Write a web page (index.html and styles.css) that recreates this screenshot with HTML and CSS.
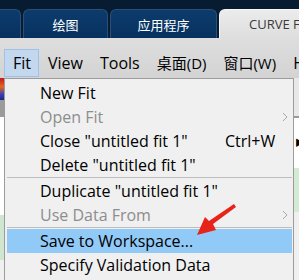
FILE: index.html
```html
<!DOCTYPE html>
<html lang="zh">
<head>
    <meta charset="UTF-8">
    <title>Curve Fitting</title>
    <link rel="stylesheet" href="styles.css">
</head>
<body>
    <div class="tabstrip">
        <div class="tab tab-first"></div>
        <div class="tab tab-plot">绘图</div>
        <div class="tab tab-apps">应用程序</div>
        <div class="tab tab-active">CURVE FIT</div>
    </div>
    <div class="menubar">
        <span class="mb-item open">Fit</span>
        <span class="mb-item">View</span>
        <span class="mb-item">Tools</span>
        <span class="mb-item cjk">桌面(D)</span>
        <span class="mb-item cjk">窗口(W)</span>
        <span class="mb-item">H</span>
    </div>
    <div class="workspace">
        <div class="edge edge-left">
            <div class="blk blk-image"></div>
            <div class="blk blk-gray"></div>
            <div class="blk blk-white"></div>
            <div class="blk blk-green"></div>
        </div>
        <div class="edge edge-right">
            <div class="blk blk-light"></div>
            <div class="blk blk-line"></div>
            <div class="blk blk-white2"><span class="tri">▶</span></div>
            <div class="blk blk-green2"></div>
        </div>
    </div>

    <!-- menu Fit abierto -->
    <div class="dropdown">
        <div class="item"><span class="label">New Fit</span></div>
        <div class="item disabled"><span class="label">Open Fit</span><span class="key"><svg class="chev" viewBox="0 0 6 10"><path d="M1 1 L5 5 L1 9" /></svg></span></div>
        <div class="item"><span class="label">Close "untitled fit 1"</span><span class="key">Ctrl+W</span></div>
        <div class="item"><span class="label">Delete "untitled fit 1"</span></div>
        <div class="sep"></div>
        <div class="item"><span class="label">Duplicate "untitled fit 1"</span></div>
        <div class="item disabled"><span class="label">Use Data From</span><span class="key"><svg class="chev" viewBox="0 0 6 10"><path d="M1 1 L5 5 L1 9" /></svg></span></div>
        <div class="sep"></div>
        <div class="item hover"><span class="label">Save to Workspace...</span></div>
        <div class="item"><span class="label">Specify Validation Data</span></div>
    </div>

    <svg class="pointer" width="60" height="40" viewBox="0 0 60 40">
        <path d="M37 2 L39 5 L16 22 L19 28 L0 33 L8 15 L12 19 Z" fill="#e8231a" />
    </svg>
</body>
</html>
```

FILE: styles.css
```css
body {
    margin: 0;
    width: 299px;
    height: 280px;
    overflow: hidden;
    position: relative;
    font-family: "Open Sans", "Noto Sans CJK SC", sans-serif;
    background: #f0f0f0;
}
.tabstrip {
    height: 38px;
    background: #071b31;
    display: flex;
    align-items: flex-end;
    gap: 2px;
    margin-left: -6px;
}
.tab {
    height: 29px;
    box-sizing: border-box;
    border-radius: 6px 6px 0 0;
    border: 1px solid #2b4f78;
    border-bottom: none;
    background: linear-gradient(#0c3b6c, #07325f);
    color: #fff;
    font-size: 13px;
    display: flex;
    align-items: center;
    justify-content: center;
    flex-shrink: 0;
}
.tab-first { width: 27px; }
.tab-plot { width: 85px; }
.tab-apps { width: 107px; }
.tab-active {
    width: 100px;
    justify-content: flex-start;
    padding-left: 29px;
    background: linear-gradient(#ececec, #dedede);
    border-color: #f6f6f6;
    color: #3a3a3a;
    font-size: 13px;
}
.menubar {
    height: 40px;
    box-sizing: border-box;
    padding: 11px 0 1px 4px;
    display: flex;
    background: linear-gradient(#dedede, #d3d3d3);
    font-size: 16px;
    color: #000;
}
.mb-item {
    height: 28px;
    line-height: 27px;
    box-sizing: border-box;
    padding: 0 7px 0 8px;
    border: 1px solid transparent;
    white-space: nowrap;
}
.mb-item.cjk { font-size: 15px; }
.mb-item.open {
    background: #c3d8ee;
    border-color: #9fc3e8;
}
.workspace {
    height: 202px;
    display: flex;
    justify-content: space-between;
    background: #f0f0f0;
}
.edge {
    display: flex;
    flex-direction: column;
}
.edge-left { width: 4px; }
.edge-right { width: 5px; }
.blk-image {
    height: 22px;
    background: linear-gradient(#c2181f, #e46a1a 40%, #3b3fb6 75%, #1c2a80);
}
.blk-gray { height: 17px; background: #9b9b9b; }
.blk-white { height: 98px; background: #fff; }
.blk-green { height: 45px; background: #cfe6cf; }
.blk-light { height: 38px; background: #e8e8e8; }
.blk-line { height: 2px; background: #9a9a9a; }
.blk-white2 {
    height: 50px;
    background: #fff;
    overflow: hidden;
    font-size: 9px;
    line-height: 50px;
}
.blk-white2 .tri { margin-left: 1px; }
.blk-green2 { height: 44px; background: #d3ead3; }
.dropdown {
    position: absolute;
    top: 78px;
    left: 4px;
    width: 290px;
    height: 210px;
    box-sizing: border-box;
    border: 1px solid #9c9c9c;
    background: #f0f0f0;
    padding-top: 2px;
    font-size: 16px;
}
.item {
    height: 24px;
    margin: 0 1px 0 2px;
    padding-left: 33px;
    display: flex;
    align-items: center;
    color: #000;
    white-space: nowrap;
}
.item .label { flex: 1; }
.item .key {
    width: 67px;
    display: flex;
    align-items: center;
}
.item.disabled { color: #8d8d8d; }
.item.hover { background: #91c9f7; }
.chev {
    width: 6px;
    height: 10px;
    margin-left: auto;
    margin-right: 4px;
    fill: none;
    stroke: #a8a8a8;
    stroke-width: 1;
}
.sep {
    height: 2px;
    margin: 0 1px 0 2px;
    box-sizing: border-box;
    border-top: 1px solid #bdbdbd;
}
.pointer {
    position: absolute;
    left: 197px;
    top: 202px;
}
```
